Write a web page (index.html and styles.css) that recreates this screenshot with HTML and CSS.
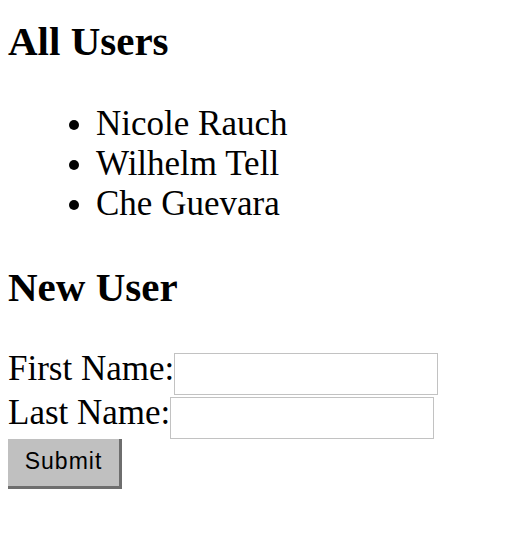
FILE: index.html
```html
<!DOCTYPE html>
<html>
<head>
<meta charset="utf-8">
<link rel="stylesheet" href="styles.css">
</head>
<body>
<h2 class="title first">All Users</h2>
<ul class="users">
  <li>Nicole Rauch</li>
  <li>Wilhelm Tell</li>
  <li>Che Guevara</li>
</ul>
<h2 class="title">New User</h2>
<form class="user-form">
  <div class="row"><label class="lbl">First Name:</label><input class="field" type="text"></div>
  <div class="row"><label class="lbl">Last Name:</label><input class="field" type="text"></div>
  <button class="submit" type="button">Submit</button>
</form>
</body>
</html>
```
FILE: styles.css
```css
html, body {
  background: #fff;
}
body {
  margin: 0;
  padding: 0 8px;
  font-family: "Liberation Serif", "Times New Roman", serif;
  font-size: 35px;
  color: #000;
}
.title {
  font-size: 41px;
  font-weight: bold;
  line-height: 46px;
  margin: 40px 0;
}
.title.first {
  margin-top: 0;
  padding-top: 18px;
}
.users {
  margin: 0;
  padding-left: 88px;
  line-height: 40px;
}
.user-form {
  padding-top: 1px;
}
.row {
  display: flex;
  align-items: flex-start;
  height: 44px;
}
.lbl {
  line-height: 40px;
  margin-top: -2px;
  white-space: nowrap;
}
.field {
  box-sizing: border-box;
  width: 264px;
  height: 42px;
  margin: 2px 0 0 0;
  border: 1px solid #c2c2c2;
  background: #fff;
  padding: 0;
  outline: none;
}
.submit {
  display: block;
  box-sizing: border-box;
  width: 114px;
  height: 50px;
  margin: 0;
  padding: 0 0 2px 0;
  background: #c0c0c0;
  border: 0;
  border-right: 3px solid #6e6e6e;
  border-bottom: 3px solid #6e6e6e;
  font-family: "Liberation Sans", Arial, sans-serif;
  font-size: 23px;
  letter-spacing: 1px;
  color: #000;
}
```
